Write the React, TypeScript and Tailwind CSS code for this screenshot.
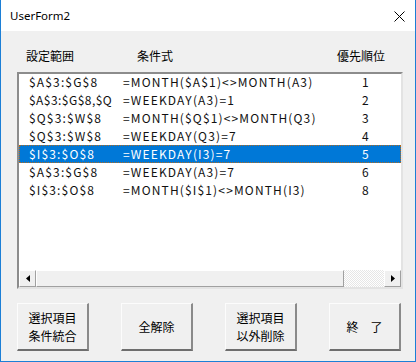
import React from "react";

const rows = [
  ["$A$3:$G$8", "=MONTH($A$1)<>MONTH(A3)", "1"],
  ["$A$3:$G$8,$Q", "=WEEKDAY(A3)=1", "2"],
  ["$Q$3:$W$8", "=MONTH($Q$1)<>MONTH(Q3)", "3"],
  ["$Q$3:$W$8", "=WEEKDAY(Q3)=7", "4"],
  ["$I$3:$O$8", "=WEEKDAY(I3)=7", "5"],
  ["$A$3:$G$8", "=WEEKDAY(A3)=7", "6"],
  ["$I$3:$O$8", "=MONTH($I$1)<>MONTH(I3)", "8"],
];

const jp = "font-['Noto_Sans_CJK_JP',sans-serif]";

function Btn({ children }: { children: React.ReactNode }) {
  return (
    <div className="w-[72px] h-[48px] border-t border-l border-t-[#fcfcfc] border-l-[#fcfcfc] border-r-2 border-b-2 border-r-[#8a8a8a] border-b-[#6e6e6e] bg-[#f0f0f0] flex items-center justify-center">
      <div className={`${jp} text-[12px] leading-[18px] text-black text-center whitespace-pre`}>{children}</div>
    </div>
  );
}

function ArrowBtn({ dir }: { dir: "l" | "r" }) {
  return (
    <div className="w-[17px] h-full bg-[#f0f0f0] border-t border-l border-t-white border-l-white border-r border-b border-r-[#a0a0a0] border-b-[#a0a0a0] flex items-center justify-center">
      <svg width="4" height="7" viewBox="0 0 4 7">
        {dir === "l" ? <polygon points="4,0 4,7 0,3.5" fill="#000" /> : <polygon points="0,0 0,7 4,3.5" fill="#000" />}
      </svg>
    </div>
  );
}

export default function App() {
  return (
    <div className="w-[416px] h-[362px] bg-[#f0f0f0] border-x border-b border-[#1c7fd6] flex flex-col">
      <div className="h-[31px] bg-white flex items-center justify-between pl-[9px] pr-[10px]">
        <span className="font-['Noto_Sans',sans-serif] text-[11.5px] text-black leading-none pt-[1px]">UserForm2</span>
        <svg width="11" height="11" viewBox="0 0 11 11" className="mt-[1px]">
          <path d="M0.5 0.5 L10.5 10.5 M10.5 0.5 L0.5 10.5" stroke="#000" strokeWidth="1" />
        </svg>
      </div>
      <div className={`${jp} text-[12px] leading-[18px] text-black flex mt-[16px] pl-[25px]`}>
        <span className="w-[111px]">設定範囲</span>
        <span className="w-[200px]">条件式</span>
        <span>優先順位</span>
      </div>
      <div className="ml-[16px] mt-[7px] w-[386px] h-[217px] border-t-2 border-l-2 border-t-[#8c8c8c] border-l-[#8c8c8c] border-r-2 border-b-2 border-r-[#e3e3e3] border-b-[#e3e3e3] bg-white flex flex-col">
        <div className="flex-1 -mt-[1px] font-['Noto_Sans_CJK_JP',sans-serif] text-[12px] tracking-[1.15px] text-[#111]">
          {rows.map((r, i) => {
            const sel = i === 4;
            return (
              <div
                key={i}
                className={
                  "grid grid-cols-[94px_239px_1fr] pl-[10px] h-[18px] items-center leading-[18px] " +
                  (sel ? "bg-[#0078d7] text-white outline outline-1 outline-dotted outline-[#b06a20] -outline-offset-1" : "")
                }
              >
                <span className={"whitespace-nowrap " + (r[0].length > 9 ? "tracking-[0.45px]" : "")}>{r[0]}</span>
                <span>{r[1]}</span>
                <span>{r[2]}</span>
              </div>
            );
          })}
        </div>
        <div className="h-[17px] flex">
          <ArrowBtn dir="l" />
          <div className="w-[308px] h-full bg-[#f0f0f0] border-t border-l border-t-white border-l-white border-r border-b border-r-[#a0a0a0] border-b-[#a0a0a0]" />
          <div className="flex-1 h-full bg-[repeating-conic-gradient(#ffffff_0_25%,#e6e6e6_0_50%)] bg-[length:2px_2px]" />
          <ArrowBtn dir="r" />
        </div>
      </div>
      <div className="mt-[14px] ml-[16px] w-[384px] flex justify-between">
        <Btn>{"選択項目\n条件統合"}</Btn>
        <Btn>全解除</Btn>
        <Btn>{"選択項目\n以外削除"}</Btn>
        <Btn>終　了</Btn>
      </div>
    </div>
  );
}
